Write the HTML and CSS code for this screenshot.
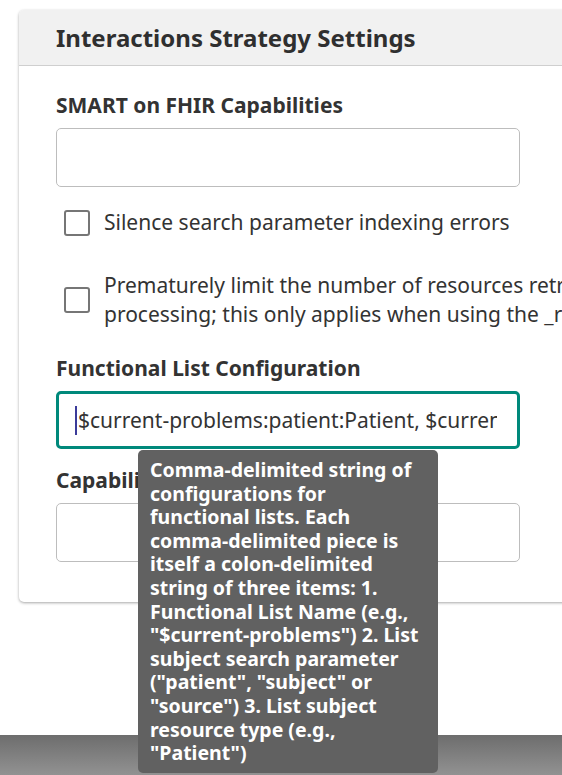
FILE: index.html
```html
<!DOCTYPE html>
<html lang="en">
<head>
<meta charset="utf-8">
<title>Interactions Strategy Settings</title>
<link rel="stylesheet" href="styles.css">
</head>
<body>
<div class="page">
  <section class="card">
    <header class="card-header">Interactions Strategy Settings</header>
    <div class="card-body">
      <div class="label label-first">SMART on FHIR Capabilities</div>
      <div class="input"></div>

      <div class="check check-one">
        <span class="box"></span>
        <span class="check-text">Silence search parameter indexing errors</span>
      </div>

      <div class="check check-two">
        <span class="box"></span>
        <span class="check-text">Prematurely limit the number of resources retrieved for<br>processing; this only applies when using the _revinclude parameter</span>
      </div>

      <div class="label label-func">Functional List Configuration</div>
      <div class="input input-focus"><span class="caret"></span><span class="value">$current-problems:patient:Patient, $current-medications:subject:Patient</span></div>

      <div class="label label-cap">Capability Statement URL</div>
      <div class="input"></div>
    </div>
  </section>
  <div class="footer-bar"></div>
  <div class="tooltip">Comma-delimited string of configurations for functional lists. Each comma-delimited piece is itself a colon-delimited string of three items: 1. Functional List Name (e.g., "$current-problems") 2. List subject search parameter ("patient", "subject" or "source") 3. List subject resource type (e.g., "Patient")</div>
</div>
</body>
</html>
```

FILE: styles.css
```css
html, body {
  margin: 0;
  padding: 0;
  background: #ffffff;
  overflow: hidden;
  width: 562px;
  height: 775px;
}

body {
  font-family: "Noto Sans", "Open Sans", sans-serif;
  color: #333333;
}

.page {
  position: relative;
  padding: 10px 0 0 19px;
  width: 900px;
}

.card {
  width: 760px;
  background: #ffffff;
  border-radius: 5px;
  box-shadow: 0 1px 3px rgba(0, 0, 0, 0.35);
  overflow: hidden;
}

.card-header {
  height: 56px;
  box-sizing: border-box;
  background: #f1f1f1;
  border-bottom: 1px solid #cfcfcf;
  padding-left: 37px;
  font-size: 24px;
  font-weight: 700;
  line-height: 56px;
  color: #2f2f2f;
}

.card-body {
  padding: 25px 37px 40px;
}

.label {
  font-size: 21px;
  font-weight: 700;
  line-height: 28px;
  color: #333333;
  margin-bottom: 9px;
}

.label-func {
  margin-top: 25px;
}

.label-cap {
  margin-top: 17px;
}

.input {
  box-sizing: border-box;
  width: 464px;
  height: 59px;
  border: 1px solid #bdbdbd;
  border-radius: 5px;
  background: #ffffff;
}

.input-focus {
  height: 58px;
  border: 3px solid #00897b;
  display: flex;
  align-items: center;
  padding: 0 20px 0 16px;
  overflow: hidden;
  white-space: nowrap;
  font-size: 21px;
  color: #333333;
}

.caret {
  flex: none;
  width: 2px;
  height: 29px;
  background: #3b3b9a;
  margin-right: 1px;
}

.value {
  overflow: hidden;
}

.check {
  display: flex;
  align-items: center;
  gap: 14px;
  padding-left: 8px;
  font-size: 21px;
  line-height: 29px;
  color: #333333;
  white-space: nowrap;
}

.check-one {
  margin-top: 21px;
}

.check-two {
  margin-top: 34px;
}

.box {
  flex: none;
  width: 26px;
  height: 26px;
  box-sizing: border-box;
  border: 2.5px solid #767676;
  border-radius: 3px;
  background: #ffffff;
}

.footer-bar {
  margin-top: 133px;
  margin-left: -19px;
  height: 40px;
  background: linear-gradient(#6d6d6d, #929292);
}

.tooltip {
  position: absolute;
  left: 138px;
  top: 450px;
  width: 300px;
  box-sizing: border-box;
  padding: 8px 12px;
  background: #616161;
  color: #ffffff;
  border-radius: 5px;
  font-size: 19.5px;
  font-weight: 700;
  line-height: 23.6px;
}
```
